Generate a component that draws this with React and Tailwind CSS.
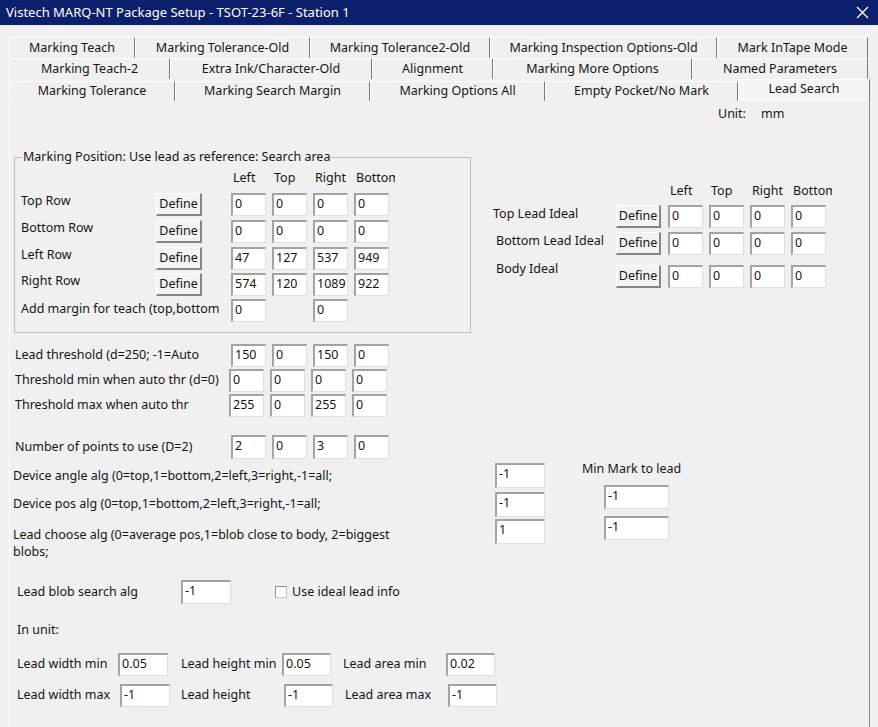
import React from 'react';

const tabRows = [
    [
        { label: 'Marking Teach', w: 'w-[126px]' },
        { label: 'Marking Tolerance-Old', w: 'w-[175px]' },
        { label: 'Marking Tolerance2-Old', w: 'w-[180px]' },
        { label: 'Marking Inspection Options-Old', w: 'w-[227px]' },
        { label: 'Mark InTape Mode', w: 'w-[151px]' },
    ],
    [
        { label: 'Marking Teach-2', w: 'w-[161px]' },
        { label: 'Extra Ink/Character-Old', w: 'w-[202px]' },
        { label: 'Alignment', w: 'w-[121px]' },
        { label: 'Marking More Options', w: 'w-[199px]' },
        { label: 'Named Parameters', w: 'w-[176px]' },
    ],
];

const lastRow = [
    { label: 'Marking Tolerance', w: 'w-[166px]' },
    { label: 'Marking Search Margin', w: 'w-[195px]' },
    { label: 'Marking Options All', w: 'w-[175px]' },
    { label: 'Empty Pocket/No Mark', w: 'w-[193px]' },
];

// sunken edit box
const Box = ({ v = '', w = 'w-[35px]', h = 'h-[23px]' }) => (
    <div
        className={`${w} ${h} shrink-0 bg-white border-t-2 border-l-2 border-r border-b border-t-[#a3a3a3] border-l-[#a3a3a3] border-r-[#dedede] border-b-[#dedede] pl-[2px] text-[12.5px] leading-[18px] whitespace-nowrap overflow-hidden`}
    >
        {v}
    </div>
);

const DefineBtn = ({ w = 'w-[46px]' }) => (
    <button
        className={`${w} h-[23px] shrink-0 flex items-center justify-center bg-[#f3f3f3] border-t border-l border-t-white border-l-white border-r-2 border-b-2 border-r-[#858585] border-b-[#858585] text-[12.5px] leading-none`}
    >
        Define
    </button>
);

const Tab = ({ label, w }) => (
    <div className={`${w} h-full flex items-center justify-center border-t border-l border-t-white border-l-white border-r border-r-[#7a7a7a] whitespace-nowrap`}>
        {label}
    </div>
);

const FourBoxes = ({ vals, w = 'w-[35px]', h = 'h-[23px]' }) => (
    <div className="flex gap-[6px]">
        {vals.map((v, i) => (
            <Box key={i} v={v} w={w} h={h} />
        ))}
    </div>
);

const Headers = () => (
    <div className="flex h-[16px] leading-[16px]">
        <div className="w-[41px]">Left</div>
        <div className="w-[41px]">Top</div>
        <div className="w-[41px]">Right</div>
        <div className="w-[39px] overflow-hidden whitespace-nowrap">Bottom</div>
    </div>
);

const groupRows = [
    { label: 'Top Row', vals: ['0', '0', '0', '0'], mt: '' },
    { label: 'Bottom Row', vals: ['0', '0', '0', '0'], mt: 'mt-[4px]' },
    { label: 'Left Row', vals: ['47', '127', '537', '949'], mt: 'mt-[4px]' },
    { label: 'Right Row', vals: ['574', '120', '1089', '922'], mt: 'mt-[3px]' },
];

const idealRows = [
    { label: 'Top Lead Ideal', pad: 'pl-0 mt-[1px]', mt: 'mt-[6px]' },
    { label: 'Bottom Lead Ideal', pad: 'pl-[3px] mt-[1px]', mt: 'mt-[4px]' },
    { label: 'Body Ideal', pad: 'pl-[3px] -mt-[4px]', mt: 'mt-[10px]' },
];

export default function App() {
    return (
        <div className="w-[878px] h-[727px] overflow-hidden bg-[#f0f0f0] flex flex-col text-[12.5px] text-[#151515] font-['Noto_Sans',sans-serif]">
            {/* Title bar */}
            <div className="h-[25px] shrink-0 bg-[#0c1f6d] flex items-center justify-between pl-[6px] pr-[9px] text-white text-[13px]">
                <span>Vistech MARQ-NT Package Setup - TSOT-23-6F - Station 1</span>
                <svg width="13" height="13" viewBox="0 0 13 13" stroke="white" strokeWidth="1.4" fill="none">
                    <path d="M1 1L12 12M12 1L1 12" />
                </svg>
            </div>

            {/* Tabs */}
            <div className="pt-[12px] pl-[9px] shrink-0">
                {tabRows.map((row, i) => (
                    <div key={i} className="flex h-[21px]">
                        {row.map((t) => (
                            <Tab key={t.label} {...t} />
                        ))}
                    </div>
                ))}
                <div className="flex h-[22px]">
                    {lastRow.map((t) => (
                        <div key={t.label} className="pt-[2px] h-full">
                            <Tab {...t} />
                        </div>
                    ))}
                    <div className="w-[132px] h-full flex items-center justify-center bg-[#f5f5f5] border-t border-l border-t-white border-l-white border-r border-r-[#7a7a7a] pb-[3px]">
                        Lead Search
                    </div>
                </div>
            </div>

            {/* Tab page */}
            <div className="ml-[9px] w-[861px] flex-1 border-l border-l-[#fdfdfd] border-r border-r-[#8a8a8a] bg-[#f0f0f0]">
                <div className="pt-[5px] pl-[708px] flex h-[21px] leading-[16px]">
                    <span>Unit:</span>
                    <span className="ml-[15px]">mm</span>
                </div>

                {/* Group box + ideal panel */}
                <div className="flex mt-[27px]">
                    <fieldset className="ml-[4px] w-[457px] border border-[#bdbdbd]">
                        <legend className="ml-[7px] px-[1px] leading-[16px]">
                            Marking Position: Use lead as reference: Search area
                        </legend>
                        <div className="pl-[6px] pt-[5px] pb-[10px]">
                            <div className="pl-[212px]">
                                <Headers />
                            </div>
                            <div className="mt-[7px]">
                                {groupRows.map((r) => (
                                    <div key={r.label} className={`flex items-start h-[23px] ${r.mt}`}>
                                        <div className="w-[135px] leading-[16px]">{r.label}</div>
                                        <DefineBtn />
                                        <div className="ml-[29px]">
                                            <FourBoxes vals={r.vals} />
                                        </div>
                                    </div>
                                ))}
                                <div className="flex items-start h-[23px] mt-[3px]">
                                    <div className="w-[210px] leading-[16px] pt-[2px] whitespace-nowrap">
                                        Add margin for teach (top,bottom
                                    </div>
                                    <Box v="0" />
                                    <div className="w-[47px]" />
                                    <Box v="0" />
                                </div>
                            </div>
                        </div>
                    </fieldset>

                    <div className="ml-[22px] mt-[34px]">
                        <div className="pl-[177px]">
                            <Headers />
                        </div>
                        {idealRows.map((r) => (
                            <div key={r.label} className={`flex items-start h-[23px] ${r.mt}`}>
                                <div className={`w-[123px] leading-[16px] ${r.pad}`}>{r.label}</div>
                                <DefineBtn w="w-[45px]" />
                                <div className="ml-[7px]">
                                    <FourBoxes vals={['0', '0', '0', '0']} />
                                </div>
                            </div>
                        ))}
                    </div>
                </div>

                {/* Threshold rows */}
                <div className="pl-[5px] mt-[11px]">
                    <div className="flex items-center h-[23px]">
                        <div className="w-[216px]">Lead threshold (d=250; -1=Auto</div>
                        <FourBoxes vals={['150', '0', '150', '0']} />
                    </div>
                    <div className="flex items-center h-[23px] mt-[2px]">
                        <div className="w-[214px] whitespace-nowrap">Threshold min when auto thr (d=0)</div>
                        <FourBoxes vals={['0', '0', '0', '0']} />
                    </div>
                    <div className="flex items-center h-[23px] mt-[2px]">
                        <div className="w-[214px]">Threshold max when auto thr</div>
                        <FourBoxes vals={['255', '0', '255', '0']} />
                    </div>
                    <div className="flex items-center h-[24px] mt-[18px]">
                        <div className="w-[216px]">Number of points to use (D=2)</div>
                        <FourBoxes vals={['2', '0', '3', '0']} h="h-[24px]" />
                    </div>
                </div>

                {/* Algorithms */}
                <div className="flex mt-[4px] pl-[3px]">
                    <div>
                        <div className="flex items-center h-[25px]">
                            <div className="w-[482px] pt-[2px]">Device angle alg (0=top,1=bottom,2=left,3=right,-1=all;</div>
                            <Box v="-1" w="w-[50px]" h="h-[25px]" />
                        </div>
                        <div className="flex items-center h-[25px] mt-[4px]">
                            <div className="w-[482px]">Device pos alg (0=top,1=bottom,2=left,3=right,-1=all;</div>
                            <Box v="-1" w="w-[50px]" h="h-[25px]" />
                        </div>
                        <div className="flex items-start mt-[2px]">
                            <div className="w-[482px] mt-[7px] leading-[17px]">
                                Lead choose alg (0=average pos,1=blob close to body, 2=biggest
                                <br />
                                blobs;
                            </div>
                            <Box v="1" w="w-[50px]" h="h-[25px]" />
                        </div>
                    </div>
                    <div className="ml-[37px] -mt-[2px]">
                        <div className="leading-[16px]">Min Mark to lead</div>
                        <div className="ml-[22px] mt-[8px]">
                            <Box v="-1" w="w-[65px]" h="h-[24px]" />
                        </div>
                        <div className="ml-[22px] mt-[7px]">
                            <Box v="-1" w="w-[65px]" h="h-[24px]" />
                        </div>
                    </div>
                </div>

                {/* Lead blob search */}
                <div className="flex items-center h-[24px] mt-[20px] pl-[7px]">
                    <div className="w-[164px]">Lead blob search alg</div>
                    <Box v="-1" w="w-[50px]" h="h-[24px]" />
                    <div className="ml-[44px] w-[12px] h-[12px] bg-white border border-t-[#8f8f8f] border-l-[#8f8f8f] border-r-[#c9c9c9] border-b-[#c9c9c9]" />
                    <div className="ml-[5px]">Use ideal lead info</div>
                </div>

                <div className="pl-[7px] mt-[18px] leading-[16px]">In unit:</div>

                <div className="flex items-center h-[23px] mt-[15px] pl-[7px]">
                    <div className="w-[101px]">Lead width min</div>
                    <Box v="0.05" w="w-[50px]" />
                    <div className="ml-[13px] w-[101px]">Lead height min</div>
                    <Box v="0.05" w="w-[49px]" />
                    <div className="ml-[12px] w-[103px]">Lead area min</div>
                    <Box v="0.02" w="w-[49px]" />
                </div>
                <div className="flex items-center h-[23px] mt-[8px] pl-[7px]">
                    <div className="w-[103px]">Lead width max</div>
                    <Box v="-1" w="w-[50px]" />
                    <div className="ml-[11px] w-[103px]">Lead height</div>
                    <Box v="-1" w="w-[49px]" />
                    <div className="ml-[12px] w-[103px]">Lead area max</div>
                    <Box v="-1" w="w-[49px]" />
                </div>
            </div>
        </div>
    );
}
